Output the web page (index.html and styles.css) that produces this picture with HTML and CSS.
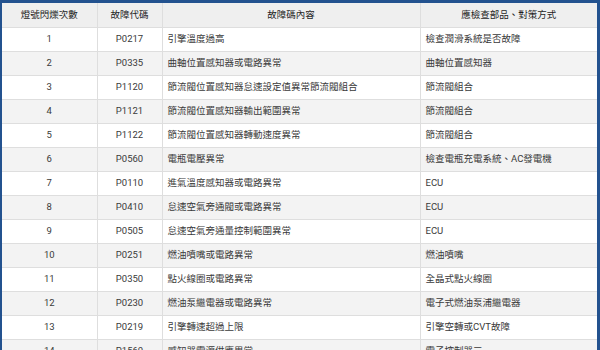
FILE: index.html
```html
<!DOCTYPE html>
<html lang="zh-Hant">
<head>
<meta charset="utf-8">
<link rel="stylesheet" href="styles.css">
</head>
<body>
<div class="frame">
<table class="codes">
<colgroup>
<col class="c1"><col class="c2"><col class="c3"><col class="c4">
</colgroup>
<thead>
<tr><th>燈號閃爍次數</th><th>故障代碼</th><th>故障碼內容</th><th>應檢查部品、對策方式</th></tr>
</thead>
<tbody>
<tr><td class="ctr">1</td><td class="ctr">P0217</td><td>引擎溫度過高</td><td>檢查潤滑系統是否故障</td></tr>
<tr><td class="ctr">2</td><td class="ctr">P0335</td><td>曲軸位置感知器或電路異常</td><td>曲軸位置感知器</td></tr>
<tr><td class="ctr">3</td><td class="ctr">P1120</td><td>節流閥位置感知器怠速設定值異常節流閥組合</td><td>節流閥組合</td></tr>
<tr><td class="ctr">4</td><td class="ctr">P1121</td><td>節流閥位置感知器輸出範圍異常</td><td>節流閥組合</td></tr>
<tr><td class="ctr">5</td><td class="ctr">P1122</td><td>節流閥位置感知器轉動速度異常</td><td>節流閥組合</td></tr>
<tr><td class="ctr">6</td><td class="ctr">P0560</td><td>電瓶電壓異常</td><td>檢查電瓶充電系統、AC發電機</td></tr>
<tr><td class="ctr">7</td><td class="ctr">P0110</td><td>進氣溫度感知器或電路異常</td><td>ECU</td></tr>
<tr><td class="ctr">8</td><td class="ctr">P0410</td><td>怠速空氣旁通閥或電路異常</td><td>ECU</td></tr>
<tr><td class="ctr">9</td><td class="ctr">P0505</td><td>怠速空氣旁通量控制範圍異常</td><td>ECU</td></tr>
<tr><td class="ctr">10</td><td class="ctr">P0251</td><td>燃油噴嘴或電路異常</td><td>燃油噴嘴</td></tr>
<tr><td class="ctr">11</td><td class="ctr">P0350</td><td>點火線圈或電路異常</td><td>全晶式點火線圈</td></tr>
<tr><td class="ctr">12</td><td class="ctr">P0230</td><td>燃油泵繼電器或電路異常</td><td>電子式燃油泵浦繼電器</td></tr>
<tr><td class="ctr">13</td><td class="ctr">P0219</td><td>引擎轉速超過上限</td><td>引擎空轉或CVT故障</td></tr>
<tr><td class="ctr">14</td><td class="ctr">P1560</td><td>感知器電源供應異常</td><td>電子控制器三</td></tr>
</tbody>
</table>
</div>
</body>
</html>
```
FILE: styles.css
```css
html, body {
  margin: 0;
  padding: 0;
  background: #ffffff;
}
body {
  width: 600px;
  height: 350px;
  overflow: hidden;
}
.frame {
  border-top: 3px solid #23528f;
  border-left: 2px solid #23528f;
  border-right: 3px solid #23528f;
  width: 595px;
  min-height: 400px;
  background: #ffffff;
}
.codes {
  width: 100%;
  border-collapse: collapse;
  table-layout: fixed;
  font-family: Roboto, "Noto Sans CJK TC", sans-serif;
  font-size: 9.5px;
  color: #3a3a3a;
}
.c1 { width: 95px; }
.c2 { width: 65px; }
.c3 { width: 258px; }
.c4 { width: auto; }
.codes th,
.codes td {
  height: 24px;
  box-sizing: border-box;
  padding: 0 5px;
  border-right: 1px solid #dedede;
  border-bottom: 1px solid #dedede;
  white-space: nowrap;
  overflow: hidden;
  line-height: 12px;
  vertical-align: middle;
}
.codes th:last-child,
.codes td:last-child {
  border-right: none;
}
.codes th {
  background: #efefef;
  font-weight: normal;
  color: #1e1e1e;
  text-align: center;
}
.codes td {
  text-align: left;
}
.codes td.ctr {
  text-align: center;
}
.codes tbody tr:nth-child(even) td {
  background: #f3f3f3;
}
```
